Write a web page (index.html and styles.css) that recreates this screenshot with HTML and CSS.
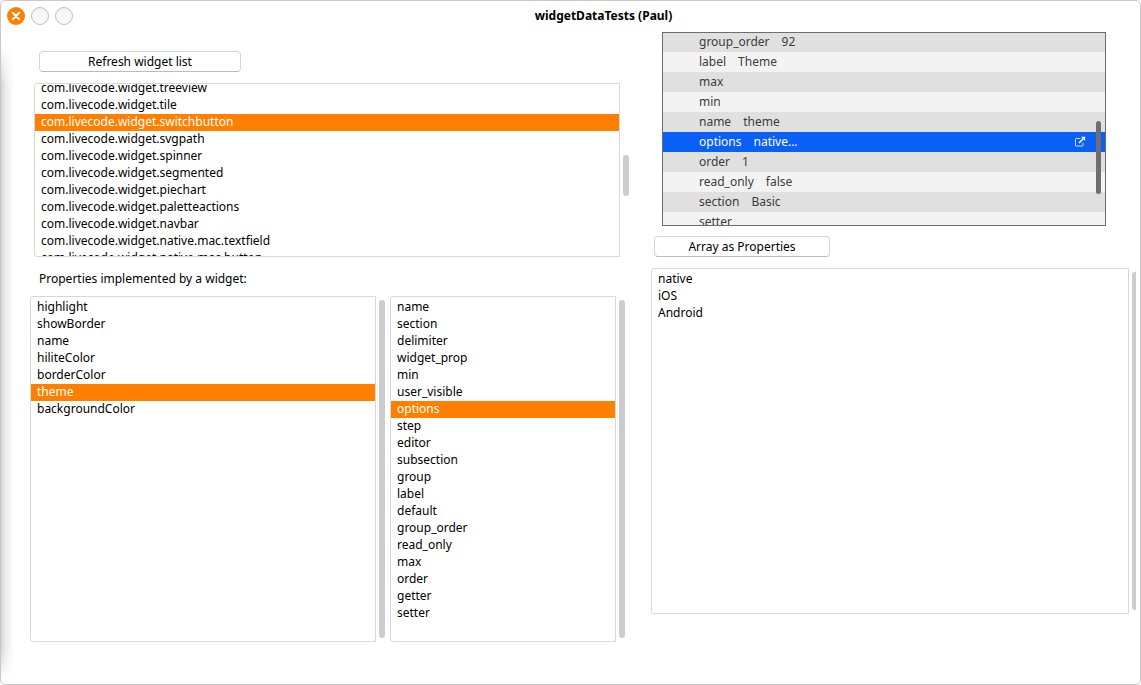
FILE: index.html
```html
<!DOCTYPE html>
<html lang="en">
<head>
<meta charset="utf-8">
<title>widgetDataTests (Paul)</title>
<link rel="stylesheet" href="styles.css">
</head>
<body>
<div class="window">
  <header class="titlebar">
    <button class="wbtn wbtn-close" type="button" aria-label="Close">
      <svg width="18" height="18" viewBox="0 0 18 18"><path d="M5.8 5.8l6.4 6.4M12.2 5.8l-6.4 6.4" stroke="#fff" stroke-width="2.2" stroke-linecap="round"/></svg>
    </button>
    <button class="wbtn" type="button" aria-label="Minimize"></button>
    <button class="wbtn" type="button" aria-label="Maximize"></button>
    <h1 class="title">widgetDataTests (Paul)</h1>
  </header>
  <main class="content">
    <section class="left">
      <button class="btn btn-refresh" type="button">Refresh widget list</button>
      <div class="field widgets">
        <div class="box">
          <ul class="list scrolled" role="listbox" aria-label="Widgets">
            <li role="option">com.livecode.widget.treeview</li>
            <li role="option">com.livecode.widget.tile</li>
            <li role="option" class="selected" aria-selected="true">com.livecode.widget.switchbutton</li>
            <li role="option">com.livecode.widget.svgpath</li>
            <li role="option">com.livecode.widget.spinner</li>
            <li role="option">com.livecode.widget.segmented</li>
            <li role="option">com.livecode.widget.piechart</li>
            <li role="option">com.livecode.widget.paletteactions</li>
            <li role="option">com.livecode.widget.navbar</li>
            <li role="option">com.livecode.widget.native.mac.textfield</li>
            <li role="option">com.livecode.widget.native.mac.button</li>
          </ul>
        </div>
        <div class="track"><div class="thumb thumb-short"></div></div>
      </div>
      <p class="caption" id="props-caption">Properties implemented by a widget:</p>
      <div class="pair">
        <div class="field">
          <div class="box">
            <ul class="list" role="listbox" aria-labelledby="props-caption">
              <li role="option">highlight</li>
              <li role="option">showBorder</li>
              <li role="option">name</li>
              <li role="option">hiliteColor</li>
              <li role="option">borderColor</li>
              <li role="option" class="selected" aria-selected="true">theme</li>
              <li role="option">backgroundColor</li>
            </ul>
          </div>
          <div class="track"><div class="thumb"></div></div>
        </div>
        <div class="field">
          <div class="box">
            <ul class="list" role="listbox" aria-label="Property attributes">
              <li role="option">name</li>
              <li role="option">section</li>
              <li role="option">delimiter</li>
              <li role="option">widget_prop</li>
              <li role="option">min</li>
              <li role="option">user_visible</li>
              <li role="option" class="selected" aria-selected="true">options</li>
              <li role="option">step</li>
              <li role="option">editor</li>
              <li role="option">subsection</li>
              <li role="option">group</li>
              <li role="option">label</li>
              <li role="option">default</li>
              <li role="option">group_order</li>
              <li role="option">read_only</li>
              <li role="option">max</li>
              <li role="option">order</li>
              <li role="option">getter</li>
              <li role="option">setter</li>
            </ul>
          </div>
          <div class="track"><div class="thumb"></div></div>
        </div>
      </div>
    </section>
    <section class="right">
      <div class="tree">
        <ul class="tree-rows">
          <li><span>group_order</span><span>92</span></li>
          <li><span>label</span><span>Theme</span></li>
          <li><span>max</span></li>
          <li><span>min</span></li>
          <li><span>name</span><span>theme</span></li>
          <li class="active"><span>options</span><span>native...</span>
            <button class="open" type="button" aria-label="Open options">
              <svg width="12" height="12" viewBox="0 0 12 12" fill="none" stroke="#fff"><path d="M6.5 2.5H2.2q-.7 0-.7.7v6.1q0 .7.7.7h6.1q.7 0 .7-.7V6.8" stroke-opacity=".8"/><path d="M5 7l4.5-4.5" stroke-width="1.6"/><path d="M7 .8h4.2V5z" fill="#fff" stroke="none"/></svg>
            </button>
          </li>
          <li><span>order</span><span>1</span></li>
          <li><span>read_only</span><span>false</span></li>
          <li><span>section</span><span>Basic</span></li>
          <li><span>setter</span></li>
        </ul>
        <div class="tree-thumb"></div>
      </div>
      <button class="btn btn-array" type="button">Array as Properties</button>
      <div class="field values">
        <div class="box">
          <ul class="list" role="listbox" aria-label="Array values">
            <li role="option">native</li>
            <li role="option">iOS</li>
            <li role="option">Android</li>
          </ul>
        </div>
        <div class="track track-edge"><div class="thumb"></div></div>
      </div>
    </section>
  </main>
</div>
</body>
</html>
```
FILE: styles.css
```css
* { box-sizing: border-box; }

body {
  margin: 0;
  background: #fff;
  color: #000;
  font: 12px/17px "Noto Sans", sans-serif;
}

button {
  font: inherit;
  color: inherit;
  padding: 0;
}

ul {
  list-style: none;
  margin: 0;
  padding: 0;
}

.window {
  position: relative;
  display: flex;
  flex-direction: column;
  min-height: 100vh;
  border: 1px solid #c8c8c8;
  border-radius: 5px;
  overflow: hidden;
}

/* Shade along the left edge of the window */
.window::before {
  content: "";
  position: absolute;
  left: -1px;
  top: 44px;
  bottom: 4px;
  width: 14px;
  background: linear-gradient(to right, rgba(0, 0, 0, .25) 1px, rgba(0, 0, 0, .17) 1px, rgba(0, 0, 0, .07) 6px, transparent);
  mask-image: linear-gradient(to bottom, transparent, #000 40px, #000 calc(100% - 32px), transparent);
  pointer-events: none;
}

.titlebar {
  display: flex;
  align-items: center;
  gap: 6px;
  height: 30px;
  padding: 0 12px 0 6px;
}

.wbtn {
  width: 18px;
  height: 18px;
  border: 1px solid #bfbfbf;
  border-radius: 50%;
  background: linear-gradient(#f2f2f2, #fafafa);
}

.wbtn-close {
  border: 0;
  background: #ff7f00;
}

.wbtn svg { display: block; }

.title {
  flex: 1;
  margin: 0;
  padding-bottom: 2px;
  text-align: center;
  font-size: 12px;
  font-weight: 700;
}

.content {
  flex: 1;
  display: grid;
  grid-template-columns: 599fr 489fr;
  column-gap: 22px;
  padding-left: 29px;
}

.left {
  display: flex;
  flex-direction: column;
  padding: 20px 0 42px;
}

.right {
  display: flex;
  flex-direction: column;
  padding: 1px 0 70px;
}

.btn {
  height: 21px;
  border: 1px solid #d5d5d7;
  border-bottom-color: #bbbbbd;
  border-radius: 4px;
  background: #fff;
  line-height: 19px;
}

.btn-refresh {
  width: 202px;
  margin-left: 9px;
}

.btn-array {
  width: 176px;
  margin: 10px 0 11px 3px;
}

.field {
  display: flex;
  gap: 3px;
  min-width: 0;
}

.box {
  flex: 1;
  min-width: 0;
  border: 1px solid #d8d8da;
  border-radius: 3px 0 0 3px;
  overflow: hidden;
}

.list { padding: 2px 0; }

.list li {
  padding: 0 0 2px 6px;
  line-height: 15px;
  white-space: nowrap;
}

.list .selected {
  background: #ff7f00;
  color: #fff;
}

.scrolled {
  margin-top: -4px;
  padding: 0;
}

.track {
  display: flex;
  width: 6px;
  padding: 4px 0;
}

.thumb {
  flex: 1;
  border-radius: 3px;
  background: #cbcbd0;
}

.thumb-short {
  height: 41px;
  margin-top: 68px;
}

.track-edge { width: 4px; }

.track-edge .thumb { border-radius: 3px 0 0 3px; }

.widgets {
  height: 174px;
  margin: 11px 0 0 4px;
}

.caption {
  margin: 13px 0 9px 9px;
}

.pair {
  flex: 1;
  display: grid;
  grid-template-columns: 355fr 235fr;
  column-gap: 5px;
  margin-right: 4px;
}

.values {
  flex: 1;
  margin-right: 4px;
}

.tree {
  position: relative;
  height: 194px;
  margin: 0 34px 0 11px;
  border: 1px solid #6e6e6e;
  overflow: hidden;
}

.tree-rows {
  margin-top: -1px;
  color: #3c3c3c;
  line-height: 20px;
}

.tree-rows li {
  display: flex;
  align-items: center;
  gap: 12px;
  height: 20px;
  padding: 0 19px 0 36px;
  background: #f3f3f3;
}

.tree-rows li:nth-child(odd) { background: #e0e0e0; }

.tree-rows .active {
  background: #0a5ff7;
  color: #fff;
}

.open {
  width: 12px;
  height: 12px;
  margin-left: auto;
  border: 0;
  background: none;
}

.open svg { display: block; }

.tree-thumb {
  position: absolute;
  right: 4px;
  top: 88px;
  width: 5px;
  height: 73px;
  border-radius: 3px;
  background: #6e6e6e;
}
```
